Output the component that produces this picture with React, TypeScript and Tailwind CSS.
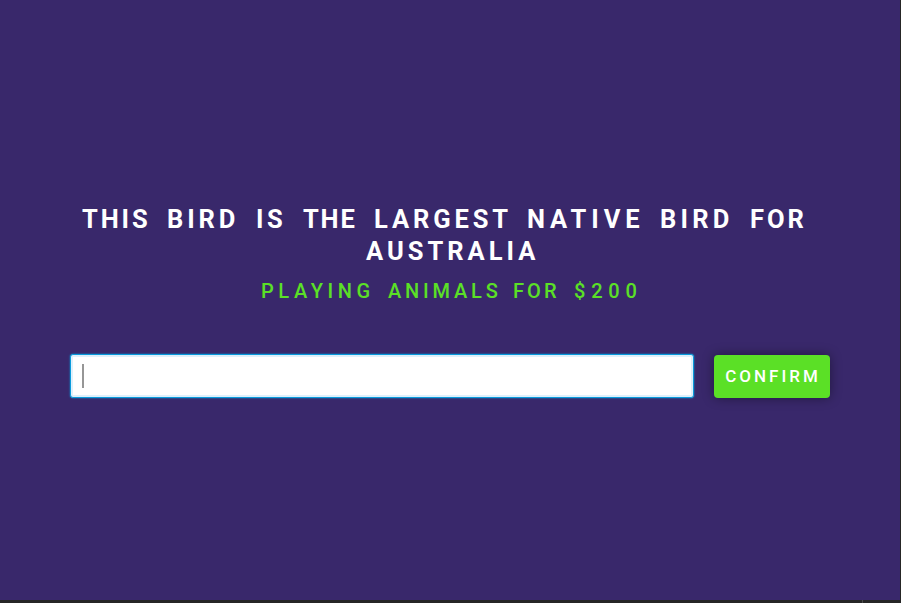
export default function App() {
  return (
    <div className="flex h-[603px] w-[901px] flex-col overflow-hidden bg-[#262626] font-[Roboto,sans-serif]">
      <main className="mr-px h-[600px] bg-[#39286b] pl-[70px] pt-[203px]">
        <h1 className="w-[760px] whitespace-nowrap text-[25.5px] font-bold uppercase leading-8 text-white">
          <span className="flex pl-[12px]">
            <span className="w-[85px] tracking-[2.9px]">This </span>
            <span className="w-[89px] tracking-[3.9px]">bird </span>
            <span className="w-[47px] tracking-[3.5px]">is </span>
            <span className="w-[71px] tracking-[1.8px]">the </span>
            <span className="w-[153px] tracking-[3.9px]">largest </span>
            <span className="w-[133px] tracking-[4.9px]">native </span>
            <span className="w-[90px] tracking-[4.2px]">bird </span>
            <span className="tracking-[3px]">for</span>
          </span>
          <span className="block pl-[296px] tracking-[4px]">Australia</span>
        </h1>
        <p className="mt-2 flex w-[760px] whitespace-nowrap pl-[191px] text-[20px] font-medium uppercase leading-8 text-[#5be026]">
          <span className="w-[127px] tracking-[4.6px]">Playing </span>
          <span className="w-[125px] tracking-[3.8px]">animals </span>
          <span className="w-[61px] tracking-[3.1px]">for </span>
          <span className="tracking-[5.8px]">$200</span>
        </p>
        <form className="mt-[47px] flex gap-5">
          <div className="flex h-11 w-[624px] items-center rounded-[3px] border border-[#0a9bdc] bg-white pl-[11px] shadow-[inset_0_0_0_2px_#dff0fb,0_0_2px_#0a9bdc]">
            <span className="h-6 w-0.5 bg-[#969696]" />
          </div>
          <button type="button" className="mt-px h-[43px] w-[116px] whitespace-nowrap rounded-[4px] bg-[#5be026] pl-[2px] text-[17px] font-medium uppercase tracking-[3px] text-white shadow-[0_0_12px_rgba(0,0,0,0.4)]">
            Confirm
          </button>
        </form>
      </main>
      <footer className="h-[3px] pl-[862px]">
        <div className="h-full w-px bg-[#4a4a4a]" />
      </footer>
    </div>
  );
}
